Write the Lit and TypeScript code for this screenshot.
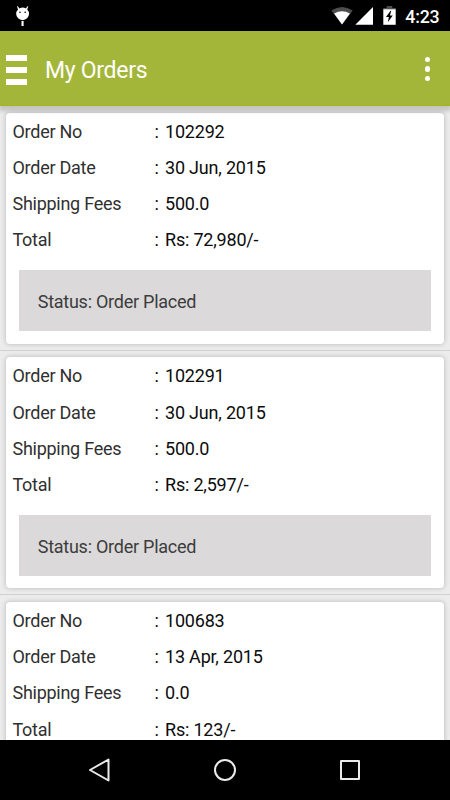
import { LitElement, html, css, svg, nothing } from "lit";
import { customElement, property } from "lit/decorators.js";

interface Order {
  no: string;
  date: string;
  fees: string;
  total: string;
  status?: string;
}

const ORDERS: Order[] = [
  { no: "102292", date: "30 Jun, 2015", fees: "500.0", total: "Rs: 72,980/-", status: "Order Placed" },
  { no: "102291", date: "30 Jun, 2015", fees: "500.0", total: "Rs: 2,597/-", status: "Order Placed" },
  { no: "100683", date: "13 Apr, 2015", fees: "0.0", total: "Rs: 123/-" },
];

@customElement("status-bar")
export class StatusBar extends LitElement {
  static styles = css`
    :host {
      display: flex;
      flex: none;
      height: 31px;
      background: #000;
      color: #fff;
      align-items: center;
      padding: 0 10.5px 0 16px;
      box-sizing: border-box;
    }
    svg { display: block; flex: none; }
    .gap { flex: 1; }
    .wifi { margin-right: 2px; }
    .signal { margin-right: 10px; }
    .battery { margin-right: 9px; }
    .time {
      font: 500 17.8px/31px Roboto, sans-serif;
      letter-spacing: -0.2px;
      padding-top: 2px;
    }
  `;

  render() {
    return html`
      <svg width="14" height="31" viewBox="0 0 14 31">
        <path d="M1 6.4L1.9 6.2L3.4 8.4A6.6 6.6 0 0 1 9.9 8.4L11.4 6.2L12.3 6.6L11.2 9.5A6.4 6.3 0 1 1 2 9.5Z" fill="#fff" />
        <path d="M5.5 21H7.6V26H5.5Z" fill="#fff" />
        <circle cx="4" cy="12.2" r="0.8" fill="#000" />
        <circle cx="9.2" cy="12.2" r="0.8" fill="#000" />
      </svg>
      <div class="gap"></div>
      <svg class="wifi" width="22" height="31" viewBox="0 0 22 31">
        <path d="M0.3 10.6Q11 3.2 21.7 10.6L11 24.5Z" fill="#4d4d4d" />
        <path d="M3.1 13.6Q11 8.7 18.9 13.6L11 24.5Z" fill="#fff" />
      </svg>
      <svg class="signal" width="18" height="31" viewBox="0 0 18 31">
        <path d="M0.3 24.7L18 7V24.7Z" fill="#fff" />
      </svg>
      <svg class="battery" width="13" height="31" viewBox="0 0 13 31">
        <path d="M3.7 6H9.3V8H12.7V10H0.3V8H3.7Z" fill="#4d4d4d" />
        <path d="M0.3 9.3H12.7V24.8H0.3Z" fill="#fff" />
        <path d="M7.6 10.8L3 17H5.9L4.8 22.2L9.8 15.6H6.9L8.3 10.8Z" fill="#000" />
      </svg>
      <span class="time">4:23</span>
    `;
  }
}

@customElement("app-bar")
export class AppBar extends LitElement {
  static styles = css`
    :host {
      display: flex;
      flex: none;
      height: 75px;
      background: #a4b639;
      align-items: center;
      padding: 0 20px 0 6px;
      box-sizing: border-box;
      position: relative;
      z-index: 1;
      box-shadow: 0 4px 4px 1px rgba(0, 0, 0, 0.17);
      border-bottom: 1px solid #a5b713;
    }
    .menu {
      display: flex;
      flex-direction: column;
      gap: 6px;
      padding-top: 4px;
    }
    .menu i { width: 21px; height: 6px; background: #fff; }
    .title {
      flex: 1;
      margin-left: 18px;
      padding-top: 5px;
      font: 400 23px/30px Roboto, sans-serif;
      letter-spacing: -0.3px;
      color: #fff;
    }
    .more {
      display: flex;
      flex-direction: column;
      gap: 4px;
      padding-top: 2px;
      width: 5.5px;
    }
    .more i { height: 5.5px; border-radius: 50%; background: #fff; }
  `;

  render() {
    return html`
      <div class="menu"><i></i><i></i><i></i></div>
      <div class="title">My Orders</div>
      <div class="more"><i></i><i></i><i></i></div>
    `;
  }
}

@customElement("order-card")
export class OrderCard extends LitElement {
  @property({ attribute: false }) order!: Order;

  static styles = css`
    :host {
      display: block;
      flex: none;
      height: 244.6px;
      padding: 6.5px 6.5px 0 6px;
      box-sizing: border-box;
      border-bottom: 1px solid #d0d0d0;
      font: 400 18px/36.2px Roboto, sans-serif;
      letter-spacing: -0.2px;
    }
    .card {
      height: 231.4px;
      box-sizing: border-box;
      padding-top: 1.35px;
      background: #fff;
      border-radius: 4px;
      box-shadow: 0 0 4px 1px rgba(0, 0, 0, 0.16);
    }
    .row {
      display: grid;
      grid-template-columns: 142px 10.5px 1fr;
      padding-left: 6.5px;
      height: 36.2px;
      color: #0c0c0c;
    }
    .label {
      color: #303030;
      letter-spacing: -0.27px;
    }
    .status {
      height: 61px;
      margin: 11.5px 12.5px 0 12.7px;
      padding-left: 19px;
      background: #dbd9da;
      line-height: 63px;
      letter-spacing: -0.25px;
      color: #3c3c3c;
    }
  `;

  row(label: string, value: string) {
    return html`<div class="row"><span class="label">${label}</span><span>:</span><span>${value}</span></div>`;
  }

  render() {
    const o = this.order;
    return html`
      <div class="card">
        ${this.row("Order No", o.no)}
        ${this.row("Order Date", o.date)}
        ${this.row("Shipping Fees", o.fees)}
        ${this.row("Total", o.total)}
        ${o.status ? html`<div class="status">Status: ${o.status}</div>` : nothing}
      </div>
    `;
  }
}

@customElement("nav-bar")
export class NavBar extends LitElement {
  static styles = css`
    :host {
      display: flex;
      flex: none;
      height: 60px;
      background: #000;
      justify-content: center;
      align-items: center;
      gap: 101px;
    }
    svg { display: block; }
  `;

  icon(shape: unknown) {
    return html`<svg width="24" height="24" viewBox="0 0 24 24" fill="none" stroke="#ebebeb" stroke-width="2" stroke-linejoin="round">${shape}</svg>`;
  }

  render() {
    return html`
      ${this.icon(svg`<path d="M2 12L20.5 1.5V22.5Z" />`)}
      ${this.icon(svg`<circle cx="12" cy="12" r="10" />`)}
      ${this.icon(svg`<rect x="3" y="3" width="18" height="18" />`)}
    `;
  }
}

@customElement("app-root")
export class AppRoot extends LitElement {
  static styles = css`
    :host {
      display: flex;
      flex-direction: column;
      width: 450px;
      height: 800px;
      overflow: hidden;
      background: #ececec;
    }
    .list {
      display: flex;
      flex-direction: column;
      flex: 1;
      min-height: 0;
      overflow: hidden;
    }
  `;

  render() {
    return html`
      <status-bar></status-bar>
      <app-bar></app-bar>
      <div class="list">${ORDERS.map((o) => html`<order-card .order=${o}></order-card>`)}</div>
      <nav-bar></nav-bar>
    `;
  }
}
